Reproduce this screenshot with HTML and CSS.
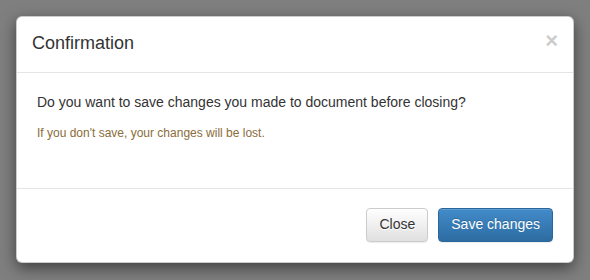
FILE: index.html
```html
<!DOCTYPE html>
<html lang="en">
<head>
<meta charset="UTF-8" />
<meta name="viewport" content="width=device-width,initial-scale=1.0" />
<title>Confirmation</title>
<link rel="stylesheet" href="styles.css">
</head>
<body>
  <div class="modal-dialog">
    <div class="modal-content">
      <div class="modal-header">
        <h4 class="modal-title">Confirmation</h4>
        <button type="button" class="close">&times;</button>
      </div>
      <div class="modal-body">
        <p>Do you want to save changes you made to document before closing?</p>
        <p class="text-warning"><small>If you don't save, your changes will be lost.</small></p>
      </div>
      <div class="modal-footer">
        <button type="button" class="btn btn-default">Close</button>
        <button type="button" class="btn btn-primary">Save changes</button>
      </div>
    </div>
  </div>
</body>
</html>
```

FILE: styles.css
```css
* { box-sizing: border-box; }
html, body { height: 100%; }
body { margin: 0; background: #7f7f7f; font-family: "Liberation Sans", Arial, sans-serif; font-size: 14px; line-height: 1.428571; color: #333; }
.modal-dialog { padding: 16px; }
.modal-content { background: #fff; border: 1px solid rgba(0,0,0,0.2); border-radius: 6px; box-shadow: 0 5px 15px rgba(0,0,0,0.5); }
.modal-header { display: flex; justify-content: space-between; align-items: flex-start; padding: 14px 15px 15px 15px; border-bottom: 1px solid #e5e5e5; }
.modal-title { margin: 0; font-size: 18px; font-weight: 500; line-height: 1.428571; }
.close { padding: 0; margin-top: -1px; background: none; border: 0; font-family: inherit; font-size: 22px; font-weight: bold; line-height: 1; color: #000; opacity: 0.2; cursor: pointer; }
.modal-body { padding: 20px; }
.modal-body p { margin: 0 0 10px; }
.text-warning { color: #8a6d3b; }
small { font-size: 12px; }
.modal-footer { display: flex; justify-content: flex-end; gap: 10px; margin-top: 15px; padding: 19px 20px 20px; border-top: 1px solid #e5e5e5; }
.btn { padding: 6px 12px; font-family: inherit; font-size: 14px; line-height: 1.428571; border: 1px solid transparent; border-radius: 4px; cursor: pointer; text-shadow: 0 1px 0 rgba(255,255,255,0.2); box-shadow: inset 0 1px 0 rgba(255,255,255,0.15), 0 1px 1px rgba(0,0,0,0.075); }
.btn-default { color: #333; background: linear-gradient(#fff, #e0e0e0); border-color: #ccc; text-shadow: 0 1px 0 #fff; }
.btn-primary { color: #fff; background: linear-gradient(#428bca, #2d6ca2); border-color: #2b669a; text-shadow: 0 -1px 0 rgba(0,0,0,0.2); }
```
